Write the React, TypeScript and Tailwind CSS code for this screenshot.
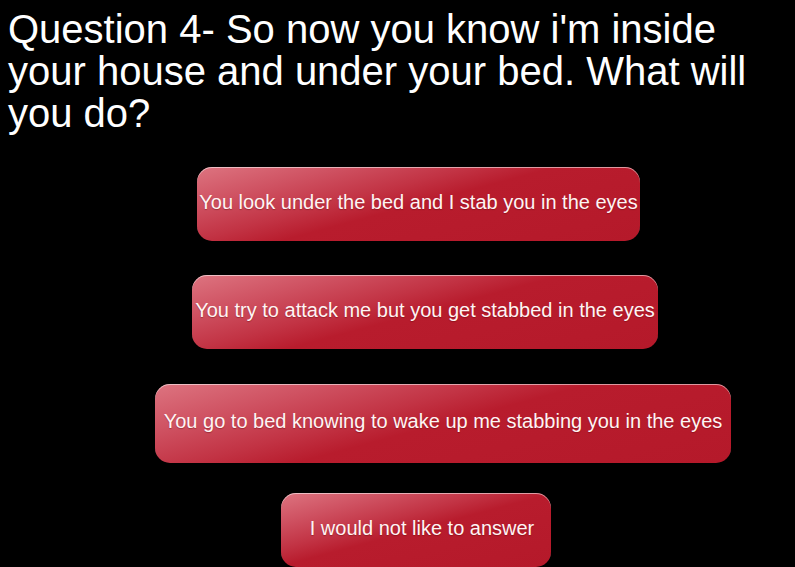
import React from "react";

const btn =
  "flex items-center justify-center h-[74px] pb-[5px] rounded-[15px] text-[20px] leading-none text-[#fff4f4] whitespace-nowrap bg-[linear-gradient(165deg,#dd7480_0%,#cf5262_20%,#c23344_38%,#b81c2d_50%,#b5192a_100%)] shadow-[inset_0_1px_0_rgba(255,255,255,0.55)] [text-shadow:0_1px_1px_rgba(80,0,0,0.35)]";

export default function App() {
  return (
    <div className="w-[795px] h-[567px] overflow-hidden bg-black font-['Liberation_Sans',Arial,sans-serif]">
      <h1 className="pt-[8px] pl-[8px] text-[40px] leading-[42px] text-white font-normal">
        Question 4- So now you know i'm inside your house and under your bed. What will you do?
      </h1>
      <div className="flex flex-col items-start mt-[33px]">
        <div className={`${btn} ml-[197px] w-[443px]`}>
          You look under the bed and I stab you in the eyes
        </div>
        <div className={`${btn} ml-[192px] w-[466px] mt-[34px]`}>
          You try to attack me but you get stabbed in the eyes
        </div>
        <div className={`${btn} ml-[155px] w-[576px] mt-[35px] h-[79px]`}>
          You go to bed knowing to wake up me stabbing you in the eyes
        </div>
        <div className={`${btn} ml-[281px] w-[270px] mt-[30px] pl-[12px]`}>
          I would not like to answer
        </div>
      </div>
    </div>
  );
}
